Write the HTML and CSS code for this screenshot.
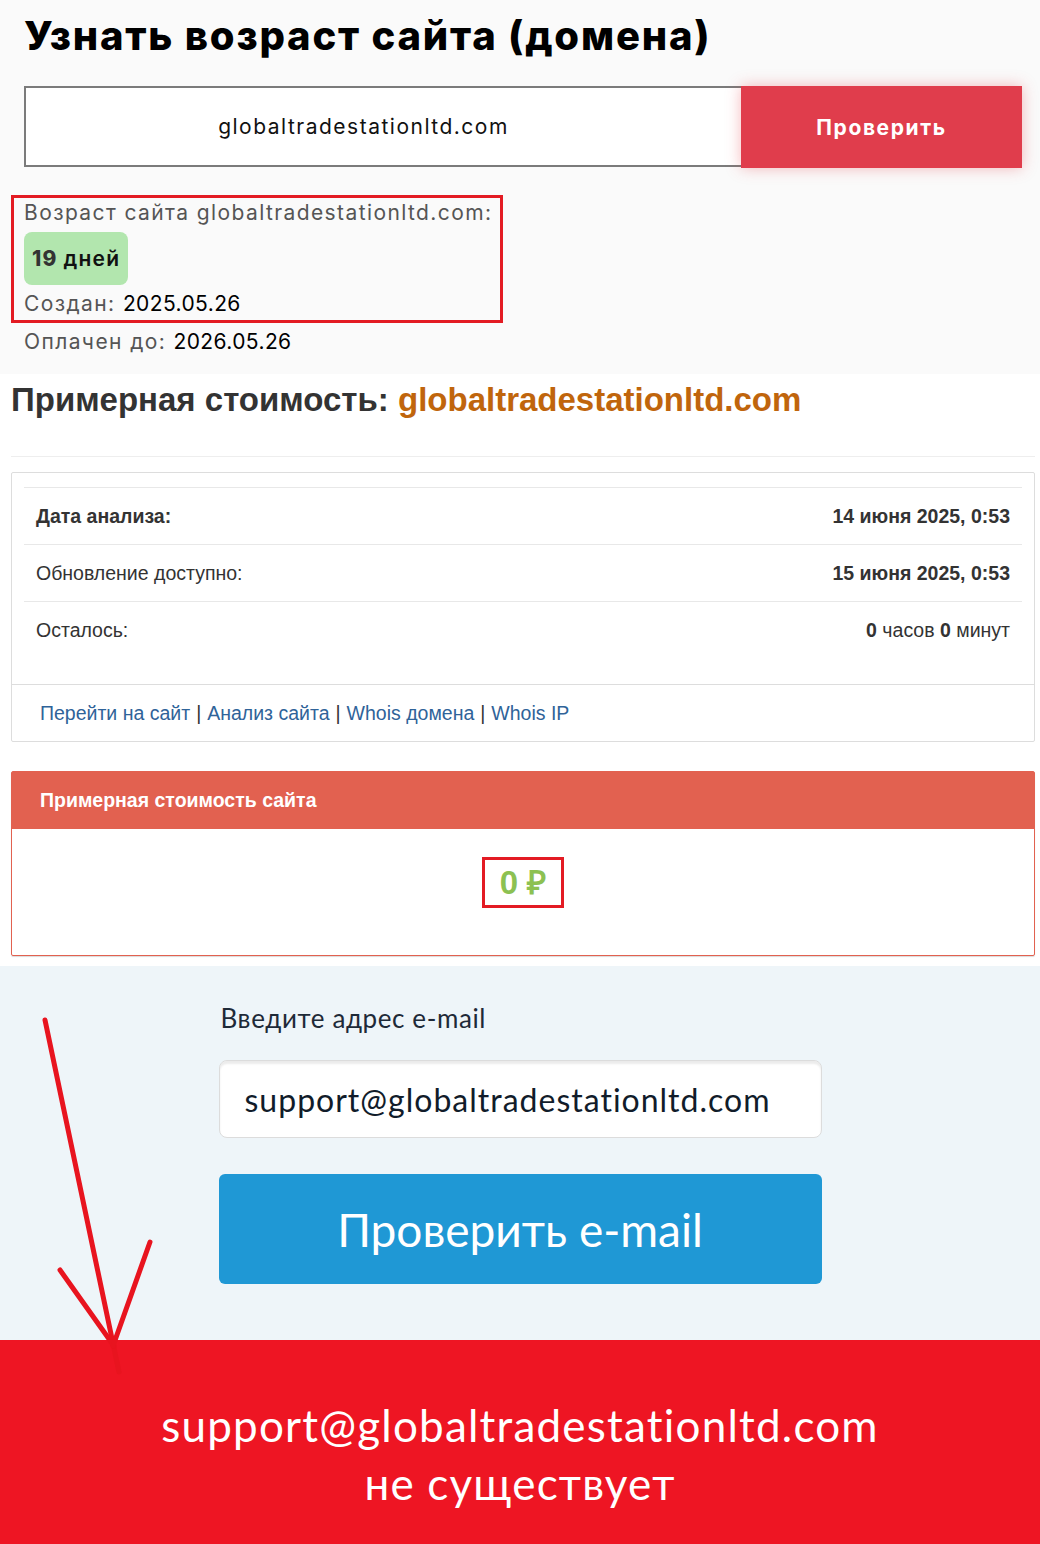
FILE: index.html
```html
<!DOCTYPE html>
<html lang="ru">
<head>
    <meta charset="UTF-8">
    <meta name="viewport" content="width=device-width, initial-scale=1.0">
    <title>Возраст сайта globaltradestationltd.com</title>
    <link rel="stylesheet" href="styles.css">
</head>
<body>
<div class="page">

    <section class="age">
        <h1>Узнать возраст сайта (домена)</h1>
        <div class="check">
            <div class="check-input">globaltradestationltd.com</div>
            <button class="check-btn">Проверить</button>
        </div>
        <div class="age-result mark">
            <p class="age-line">Возраст сайта globaltradestationltd.com:</p>
            <span class="badge"><b>19</b> дней</span>
            <p class="age-line">Создан: <span class="val">2025.05.26</span></p>
        </div>
        <p class="age-line paid">Оплачен до: <span class="val">2026.05.26</span></p>
    </section>

    <section class="cost">
        <h2>Примерная стоимость: <span class="domain">globaltradestationltd.com</span></h2>
        <hr>
        <div class="panel">
            <div class="panel-body">
                <div class="row"><b>Дата анализа:</b><b>14 июня 2025, 0:53</b></div>
                <div class="row"><span>Обновление доступно:</span><b>15 июня 2025, 0:53</b></div>
                <div class="row"><span>Осталось:</span><span><b>0</b> часов <b>0</b> минут</span></div>
            </div>
            <div class="panel-footer">
                <a href="#">Перейти на сайт</a> | <a href="#">Анализ сайта</a> | <a href="#">Whois домена</a> | <a href="#">Whois IP</a>
            </div>
        </div>

        <div class="price-panel">
            <div class="price-head">Примерная стоимость сайта</div>
            <div class="price-body">
                <span class="price mark">0 ₽</span>
            </div>
        </div>
    </section>

    <section class="email">
        <div class="email-form">
            <label class="email-label">Введите адрес e-mail</label>
            <div class="email-input">support@globaltradestationltd.com</div>
            <button class="email-btn">Проверить e-mail</button>
        </div>
    </section>

    <section class="result">
        <p>support@globaltradestationltd.com<br>не существует</p>
    </section>

    <!-- arrow drawn over the screenshot -->
    <svg class="arrow" width="1040" height="1544" viewBox="0 0 1040 1544">
        <g stroke="#e8141f" stroke-width="5" stroke-linecap="round" fill="none">
            <line x1="45" y1="1020" x2="119" y2="1372"/>
            <line x1="60" y1="1270" x2="114" y2="1346"/>
            <line x1="150" y1="1242" x2="113" y2="1346"/>
        </g>
    </svg>

</div>
</body>
</html>
```

FILE: styles.css
```css
body {
    margin: 0;
    padding: 0;
    background: #ffffff;
    font-family: 'Liberation Sans', Arial, sans-serif;
}

.page {
    width: 1040px;
    position: relative;
}

/* ---------- domain age ---------- */

.age {
    background: #fafafa;
    padding: 12px 18px 17px 11px;
    font-family: 'Inter', 'Open Sans', sans-serif;
}

h1 {
    margin: 0 0 26px 13px;
    font-size: 40px;
    line-height: 48px;
    font-weight: 800;
    color: #000;
    letter-spacing: 1.8px;
}

.check {
    display: flex;
    margin-left: 13px;
    height: 82px;
}

.check-input {
    width: 717px;
    box-sizing: border-box;
    height: 81px;
    border: 2px solid #7b7b7b;
    border-right: none;
    background: #fff;
    display: flex;
    align-items: center;
    justify-content: center;
    padding-right: 40px;
    font-size: 21px;
    letter-spacing: 1.5px;
    color: #111;
}

.check-btn {
    width: 281px;
    height: 82px;
    border: none;
    background: #e03d4c;
    color: #fff;
    font-family: 'Inter', sans-serif;
    font-size: 21px;
    font-weight: 700;
    letter-spacing: 1.6px;
    box-shadow: 0 0 14px rgba(230, 60, 70, 0.35);
}

.mark {
    border: 3px solid #e31b23;
}

.age-result {
    margin-top: 27px;
    width: 476px;
    padding: 0 0 1px 10px;
}

.age-line {
    margin: 0;
    font-size: 21px;
    line-height: 30px;
    letter-spacing: 1.4px;
    color: #555;
}

.age-line .val {
    color: #000;
    letter-spacing: 0.4px;
}

.badge {
    display: inline-flex;
    align-items: center;
    margin: 4px 0;
    height: 53px;
    padding: 0 8px;
    border-radius: 8px;
    background: #b2e6ae;
    font-size: 21px;
    font-weight: 600;
    letter-spacing: 1.2px;
    color: #111;
}

.badge b {
    color: #333;
    font-weight: 800;
    margin-right: 6px;
}

.paid {
    margin: 4px 0 0 13px;
}

/* ---------- site cost ---------- */

.cost {
    padding: 6px 5px 10px 11px;
}

h2 {
    margin: 0;
    font-size: 33px;
    line-height: 40px;
    font-weight: 700;
    color: #333;
}

h2 .domain {
    color: #c0650c;
}

hr {
    margin: 36px 0 15px;
    border: none;
    border-top: 1px solid #eee;
}

.panel {
    border: 1px solid #ddd;
    border-radius: 2px;
    font-size: 19.5px;
    color: #333;
}

.panel-body {
    padding: 14px 12px 26px;
}

.row {
    display: flex;
    justify-content: space-between;
    align-items: center;
    height: 56px;
    padding: 0 12px;
    border-top: 1px solid #e8e8e8;
}

.panel-footer {
    border-top: 1px solid #ddd;
    height: 56px;
    padding: 0 28px;
    display: flex;
    align-items: center;
    gap: 6px;
    color: #333;
}

.panel-footer a {
    color: #2f6399;
    text-decoration: none;
}

.price-panel {
    margin-top: 29px;
    border: 1px solid #e26150;
    border-radius: 2px;
    box-shadow: 0 1px 1px rgba(0, 0, 0, 0.15);
}

.price-head {
    height: 57px;
    background: #e26150;
    color: #fff;
    font-size: 19.5px;
    font-weight: 700;
    display: flex;
    align-items: center;
    padding-left: 28px;
}

.price-body {
    display: flex;
    justify-content: center;
    padding: 28px 0 47px;
}

.price {
    display: inline-block;
    padding: 0 15px;
    line-height: 45px;
    font-size: 33px;
    font-weight: 700;
    color: #8cc152;
}

/* ---------- e-mail check ---------- */

.email {
    background: #eef5f9;
    padding: 34px 0 56px;
    font-family: 'Lato', sans-serif;
}

.email-form {
    width: 603px;
    margin: 0 auto;
    display: flex;
    flex-direction: column;
}

.email-label {
    margin-left: 2px;
    font-size: 26px;
    line-height: 36px;
    letter-spacing: 0.6px;
    color: #1e2a38;
}

.email-input {
    margin-top: 24px;
    height: 78px;
    box-sizing: border-box;
    background: #fff;
    border: 1px solid #dcdcdc;
    border-radius: 8px;
    box-shadow: inset 0 3px 2px rgba(0, 0, 0, 0.08);
    padding-left: 25px;
    display: flex;
    align-items: center;
    font-size: 32px;
    letter-spacing: 1px;
    color: #111c2a;
}

.email-btn {
    margin-top: 36px;
    height: 110px;
    border: none;
    border-radius: 6px;
    background: #1f98d5;
    color: #fff;
    font-family: 'Lato', sans-serif;
    font-size: 46px;
}

.result {
    background: #ee1523;
    height: 204px;
    box-sizing: border-box;
    padding-top: 56px;
    text-align: center;
    font-family: 'Lato', sans-serif;
}

.result p {
    margin: 0;
    color: #fff;
    font-size: 44px;
    line-height: 58px;
    letter-spacing: 1.2px;
}

.arrow {
    position: absolute;
    top: 0;
    left: 0;
    pointer-events: none;
}
```
